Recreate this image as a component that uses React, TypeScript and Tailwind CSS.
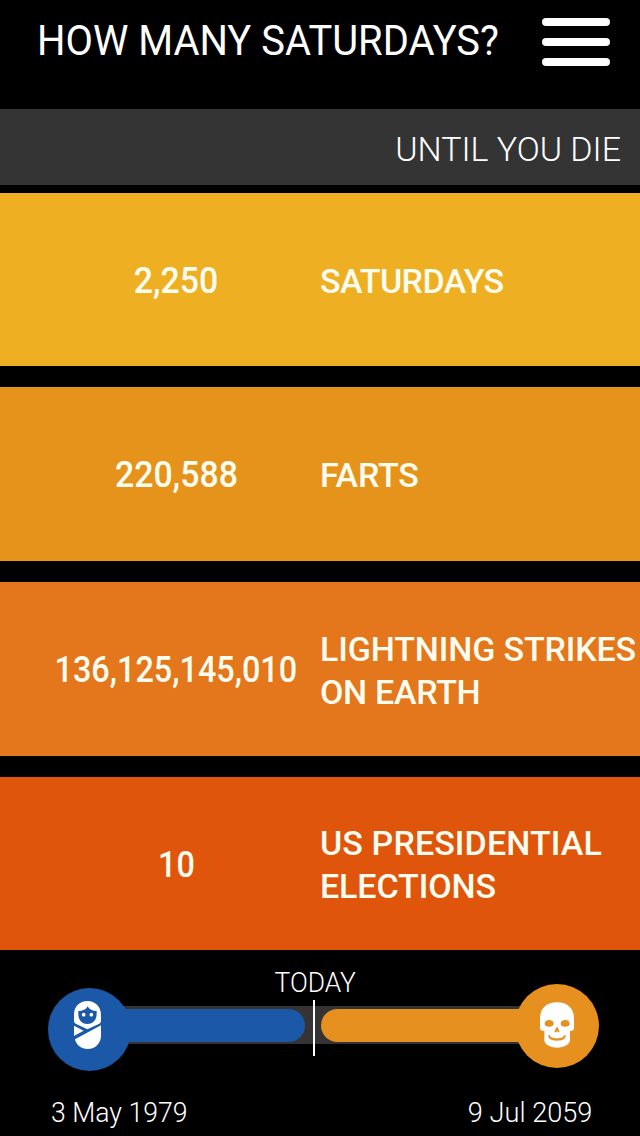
import React from 'react'

type Stat = {
  value: string
  label: { text: string; tracking: string }[]
  bg: string
  height: string
  scale: string
}

const stats: Stat[] = [
  {
    value: '2,250',
    label: [{ text: 'SATURDAYS', tracking: 'tracking-[-0.6px]' }],
    bg: 'bg-[#eeaf22]',
    height: 'h-[173px]',
    scale: 'scale-x-[0.94]',
  },
  {
    value: '220,588',
    label: [{ text: 'FARTS', tracking: 'tracking-[-0.2px]' }],
    bg: 'bg-[#e6931c]',
    height: 'h-[174px]',
    scale: 'scale-x-[0.94]',
  },
  {
    value: '136,125,145,010',
    label: [
      { text: 'LIGHTNING STRIKES', tracking: 'tracking-[-0.15px]' },
      { text: 'ON EARTH', tracking: 'tracking-[-0.3px]' },
    ],
    bg: 'bg-[#e4761b]',
    height: 'h-[174px]',
    scale: 'scale-x-[0.9]',
  },
  {
    value: '10',
    label: [
      { text: 'US PRESIDENTIAL', tracking: 'tracking-[0.1px]' },
      { text: 'ELECTIONS', tracking: 'tracking-[-0.1px]' },
    ],
    bg: 'bg-[#de550b]',
    height: 'h-[173px]',
    scale: 'scale-x-[0.9]',
  },
]

function BabyIcon() {
  return (
    <svg width="27" height="48" viewBox="0 0 81 144" fill="#fff">
      <path fillRule="evenodd" d="M0 41C0 16 17 0 40 0s41 16 41 41v19q0 5-5 8L40 85 5 68q-5-3-5-8ZM13 30v8c0 19 10 31 27 31s28-12 28-31v-8c-12 0-22-4-27-14-5 10-15 14-28 14Z" />
      <circle cx="29" cy="41" r="5.5" />
      <circle cx="52" cy="41" r="5.5" />
      <path d="M0 74 29 89 0 105Z" />
      <path d="M81 73v30c0 24-16 41-40 41-19 0-34-11-38-29Z" />
    </svg>
  )
}

function SkullIcon() {
  return (
    <svg width="34" height="46" viewBox="0 0 102 136" fill="#fff">
      <path
        fillRule="evenodd"
        d="M51 0c31 0 51 18 51 48v30c0 6-5 8-12 8v27c0 12-17 23-39 23s-38-11-38-23V86C5 86 0 84 0 78V48C0 18 20 0 51 0ZM14 65c0 6 6 8 13 8 9 0 14-3 14-9 0-7-5-11-14-11-8 0-13 5-13 12Zm48-1c0 6 5 9 14 9 7 0 13-2 13-8 0-7-5-12-13-12-9 0-14 4-14 11ZM51 73c-4 5-8 13-8 17 3 1 5 0 8-3 3 3 5 4 8 3 0-4-4-12-8-17ZM25 98c-1 13 11 17 26 17s27-4 26-17l-5 1c-1 6-7 9-21 9s-20-3-21-9Z"
      />
    </svg>
  )
}

function Header() {
  return (
    <header className="flex h-[109px] items-start justify-between pt-[18px] pr-[30px] pl-[37px]">
      <h1 className="w-[470px] origin-left scale-x-[0.95] text-[42px] leading-[46px] whitespace-nowrap">HOW MANY SATURDAYS?</h1>
      <button type="button" aria-label="Menu" className="flex w-[68px] shrink-0 flex-col gap-3">
        <span className="h-2 rounded-full bg-white" />
        <span className="h-2 rounded-full bg-white" />
        <span className="h-2 rounded-full bg-white" />
      </button>
    </header>
  )
}

function StatRow({ stat }: { stat: Stat }) {
  return (
    <div className={`flex items-center pt-[3px] pl-8 font-medium text-[#fffdf0] ${stat.bg} ${stat.height}`}>
      <div className="flex w-[288px] justify-center text-[36px] leading-[43px]">
        <span className={stat.scale}>{stat.value}</span>
      </div>
      <div className="flex flex-col items-start text-[34px] leading-[43px] whitespace-nowrap">
        {stat.label.map((line) => (
          <span key={line.text} className={line.tracking}>
            {line.text}
          </span>
        ))}
      </div>
    </div>
  )
}

function Timeline() {
  return (
    <footer className="flex h-[186px] flex-col font-light">
      <div className="flex h-[50px] justify-center pt-4 pr-[10px] text-[28px] leading-[34px]">
        <span className="scale-x-[0.94]">TODAY</span>
      </div>
      <div className="relative mx-[90px] flex h-[56px] items-center">
        <div className="mb-[6px] flex h-[38px] w-full items-center justify-between bg-[#363334]">
          <div className="h-[33px] w-[215px] rounded-r-full bg-[#1b59a8]" />
          <div className="h-[33px] w-[229px] rounded-l-full bg-[#e69020]" />
        </div>
        <div className="absolute top-0 left-[223px] h-[56px] w-[2px] bg-white" />
        <div className="absolute top-[-12px] left-[-42px] flex size-[83px] items-center justify-center rounded-full bg-[#1b59a8] pr-1 pb-[9px]">
          <BabyIcon />
        </div>
        <div className="absolute top-[-16px] right-[-49px] flex size-[84px] items-center justify-center rounded-full bg-[#e69020] pb-[2px]">
          <SkullIcon />
        </div>
      </div>
      <div className="flex justify-between pt-10 pr-[48px] pl-[51px] text-[28px] leading-[34px]">
        <span className="origin-left scale-x-[0.95]">3 May 1979</span>
        <span className="origin-right scale-x-[0.97]">9 Jul 2059</span>
      </div>
    </footer>
  )
}

export default function App() {
  return (
    <div className="h-[1136px] w-[640px] overflow-hidden bg-black font-['Roboto',sans-serif] text-white">
      <Header />
      <div className="flex h-[76px] items-center justify-end bg-[#343434] pt-[4px] pr-[19px] text-[34px] font-light">
        <span>UNTIL YOU DIE</span>
      </div>
      <main className="flex flex-col gap-[21px] pt-2">
        {stats.map((stat) => (
          <StatRow key={stat.value} stat={stat} />
        ))}
      </main>
      <Timeline />
    </div>
  )
}
